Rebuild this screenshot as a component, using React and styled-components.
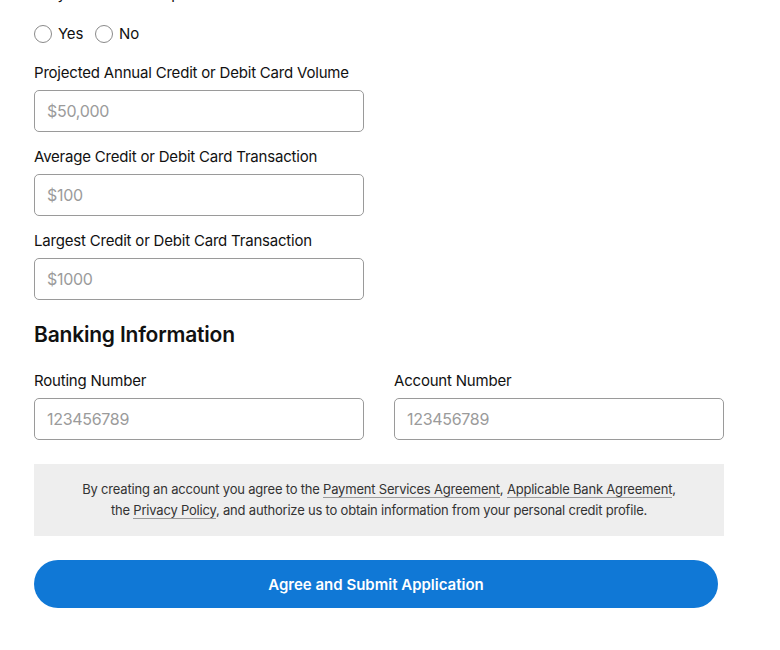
import React from "react";
import styled, { createGlobalStyle } from "styled-components";

const GlobalStyle = createGlobalStyle`
  html, body {
    margin: 0;
    padding: 0;
    background: #fff;
  }
  body {
    font-family: Inter, "Liberation Sans", Arial, sans-serif;
    color: #111;
  }
`;

const Page = styled.div`
  width: 690px;
  margin: -16px 0 0 34px;
  display: flex;
  flex-direction: column;
`;

const Label = styled.div`
  font-size: 15px;
  line-height: 20px;
  letter-spacing: -0.2px;
  color: #111;
`;

const RadioRow = styled.div`
  display: flex;
  align-items: center;
  gap: 12px;
  margin-top: 20px;
  margin-bottom: 20px;
`;

const RadioOption = styled.label`
  display: flex;
  align-items: center;
  gap: 6px;
  font-size: 15px;
  letter-spacing: -0.2px;
  color: #111;
`;

const RadioCircle = styled.span`
  width: 16px;
  height: 16px;
  border: 1.5px solid #8a8a8a;
  border-radius: 50%;
  display: inline-block;
`;

const Field = styled.div`
  display: flex;
  flex-direction: column;
  gap: 7px;
  width: 330px;
  margin-bottom: 15px;
`;

const Input = styled.input`
  box-sizing: border-box;
  height: 42px;
  width: 100%;
  border: 1px solid #9a9a9a;
  border-radius: 5px;
  padding: 0 12px;
  font-family: Inter, "Liberation Sans", Arial, sans-serif;
  font-size: 16px;
  letter-spacing: -0.3px;
  color: #111;
  outline: none;
  &::placeholder {
    color: #9b9b9b;
  }
`;

const Heading = styled.h2`
  margin: 8px 0 24px;
  font-size: 21px;
  line-height: 24px;
  font-weight: 600;
  letter-spacing: -0.2px;
  color: #111;
`;

const Columns = styled.div`
  display: grid;
  grid-template-columns: 330px 330px;
  column-gap: 30px;
`;

const Notice = styled.div`
  background: #eeeeee;
  margin-top: 9px;
  padding: 15px 20px 15px;
  text-align: center;
  font-size: 13px;
  line-height: 21px;
  letter-spacing: -0.2px;
  color: #333;
`;

const Link = styled.a`
  color: #333;
  text-decoration: none;
  border-bottom: 1px solid #9a9a9a;
`;

const SubmitButton = styled.button`
  margin-top: 24px;
  width: 684px;
  height: 48px;
  border: none;
  border-radius: 24px;
  background: #1078d6;
  color: #fff;
  font-family: Inter, "Liberation Sans", Arial, sans-serif;
  font-size: 15px;
  font-weight: 600;
  letter-spacing: 0;
  cursor: pointer;
`;

const Radio = ({ label }) => (
  <RadioOption>
    <RadioCircle />
    {label}
  </RadioOption>
);

const TextField = ({ label, placeholder }) => (
  <Field>
    <Label>{label}</Label>
    <Input placeholder={placeholder} />
  </Field>
);

export default function App() {
  return (
    <>
      <GlobalStyle />
      <Page>
        <Label>Do you have a card processor?</Label>
        <RadioRow>
          <Radio label="Yes" />
          <Radio label="No" />
        </RadioRow>
        <TextField
          label="Projected Annual Credit or Debit Card Volume"
          placeholder="$50,000"
        />
        <TextField
          label="Average Credit or Debit Card Transaction"
          placeholder="$100"
        />
        <TextField
          label="Largest Credit or Debit Card Transaction"
          placeholder="$1000"
        />
        <Heading>Banking Information</Heading>
        <Columns>
          <TextField label="Routing Number" placeholder="123456789" />
          <TextField label="Account Number" placeholder="123456789" />
        </Columns>
        <Notice>
          By creating an account you agree to the{" "}
          <Link href="#">Payment Services Agreement</Link>,{" "}
          <Link href="#">Applicable Bank Agreement</Link>,
          <br />
          the <Link href="#">Privacy Policy</Link>, and authorize us to obtain
          information from your personal credit profile.
        </Notice>
        <SubmitButton>Agree and Submit Application</SubmitButton>
      </Page>
    </>
  );
}
